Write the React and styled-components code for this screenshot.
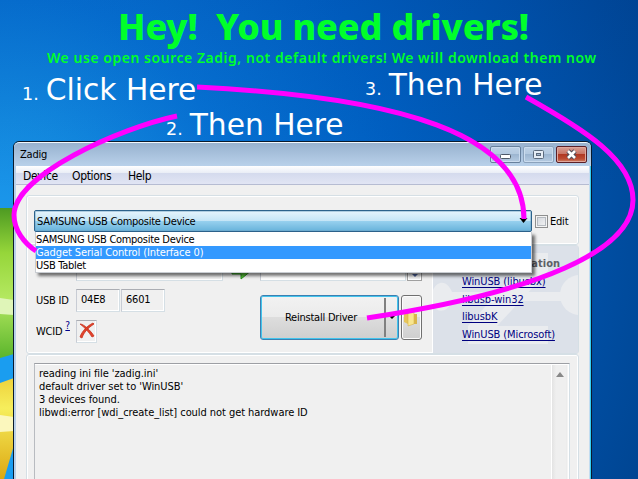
import React from "react";
import styled, { createGlobalStyle } from "styled-components";

const Global = createGlobalStyle`
  * { box-sizing: border-box; }
  body { margin: 0; overflow: hidden; }
`;

const Desktop = styled.div`
  position: relative;
  width: 638px;
  height: 479px;
  overflow: hidden;
  font-family: "DejaVu Sans", sans-serif;
  background:
    linear-gradient(180deg, rgba(0, 50, 140, 0.12), rgba(0, 60, 150, 0) 40%),
    radial-gradient(circle at 0px 220px, #1c98ec 0, #138ae0 100px, #0672d4 230px, #0060c2 400px, #0052aa 560px, #004592 690px);
`;

const Wallpaper = styled.svg`
  position: absolute;
  left: 0;
  top: 200px;
`;

const Heading = styled.h1`
  margin: 0;
  padding-left: 118px;
  height: 49px;
  font: 800 36px/54px "Noto Sans", sans-serif;
  letter-spacing: -0.15px;
  white-space: pre;
  color: #00ff2a;
`;

const Subheading = styled.p`
  margin: 0;
  padding-left: 47px;
  height: 93px;
  font: 600 14px/18px "Noto Sans", sans-serif;
  letter-spacing: 0.53px;
  white-space: nowrap;
  color: #00ff2a;
`;

const Callout = styled.div`
  position: absolute;
  left: ${(p) => p.$x}px;
  top: ${(p) => p.$y}px;
  display: flex;
  align-items: baseline;
  gap: 7px;
  color: #fff;
  font-size: 29.7px;
  line-height: 36px;
  white-space: nowrap;
  small { font-size: 17.5px; }
`;

const Arrows = styled.svg`
  position: absolute;
  inset: 0;
  z-index: 5;
`;

const Window = styled.section`
  position: relative;
  margin: -1px 0 0 13px;
  width: 579px;
  height: 360px;
  border: 1px solid #0a1a2c;
  border-radius: 6px 6px 0 0;
  padding: 0 2px;
  background: linear-gradient(90deg, #b9d1ea 0 2px, transparent 2px 575px, #c4dcf0 575px 576px, #35cdf3 576px);
  overflow: hidden;
  font: 11px/13px "DejaVu Sans Condensed", "DejaVu Sans", sans-serif;
  font-stretch: condensed;
  letter-spacing: -0.22px;
  color: #000;
`;

const TitleBar = styled.header`
  display: flex;
  justify-content: space-between;
  height: 24px;
  margin: 0 -2px;
  padding: 0 4px 0 6px;
  border-top: 1px solid #f2f8fd;
  border-radius: 5px 5px 0 0;
  background: linear-gradient(#98b2cf, #b9d1ea);
  line-height: 24px;
`;

const Controls = styled.div`
  display: flex;
  gap: 2px;
  padding-top: 3px;
`;

const Control = styled.div`
  width: 31px;
  height: 17px;
  border: 1px solid ${(p) => (p.$close ? "#5b2028" : p.$dim ? "#8ba2bc" : "#67809c")};
  border-radius: 2px;
  box-shadow: inset 0 0 0 1px ${(p) => (p.$close ? "#e0a79c" : "#cbdcee")};
  background: ${(p) => (p.$close
    ? "linear-gradient(#d8a095, #c97566 45%, #b03823 50%, #bd4c33 80%, #d0866b)"
    : "linear-gradient(#bdd1e6, #b3c9e0 48%, #9db6d1 50%, #b5cbe2)")};
  svg { display: block; }
`;

const MenuBar = styled.nav`
  display: flex;
  height: 19px;
  padding-left: 7px;
  line-height: 20px;
  font-size: 12px;
  letter-spacing: -0.35px;
  border-bottom: 1px solid #b6bcd2;
  background: linear-gradient(#fff, #e9edf6 7px, #d4daed 7px, #e1e5f4);
`;

const MenuItem = styled.span`
  width: ${(p) => p.$w}px;
`;

const Body = styled.main`
  height: 320px;
  padding: 10px 10px 0;
  background: #f0f0f0;
`;

const Group = styled.div`
  position: relative;
  height: ${(p) => p.$h}px;
  border: 1px solid #d5dfe5;
  border-radius: 3px;
  box-shadow: inset 0 0 0 1px #fff;
`;

const DeviceRow = styled.div`
  display: flex;
  align-items: center;
  padding: 14px 0 0 7px;
`;

const Combo = styled.div`
  width: 498px;
  height: 22px;
  border: 1px solid #2c628b;
  border-radius: 2px;
  padding-left: 2px;
  line-height: 21px;
  letter-spacing: -0.3px;
  box-shadow: inset 0 0 0 1px rgba(110, 160, 190, 0.45);
  background: linear-gradient(#e5f4fc, #c4e5f6 50%, #98d1ef 50%, #68b3db);
`;

const Check = styled.div`
  width: 13px;
  height: 13px;
  margin: 1px 2px 0 3px;
  border: 1px solid #8e8f8f;
  box-shadow: inset 0 0 0 1px #f4f4f4, inset 0 0 0 2px #b5bac0;
  background: linear-gradient(135deg, #cfd3da, #f6f6f6);
`;

const List = styled.div`
  position: absolute;
  z-index: 3;
  left: 8px;
  top: 36px;
  width: 497px;
  height: 41px;
  padding-top: 1px;
  background: #fff;
  border: 1px solid #c9cdd2;
  border-top: 0;
  box-shadow: 3px 3px 3px rgba(0, 0, 0, 0.55);
`;

const Option = styled.div`
  height: 13px;
  line-height: 13px;
  letter-spacing: ${(p) => (p.$on ? -0.1 : -0.3)}px;
  background: ${(p) => (p.$on ? "#3399ff" : "transparent")};
  color: ${(p) => (p.$on ? "#fff" : "#000")};
`;

const DriverGroup = styled(Group)`
  display: grid;
  grid-template-columns: 405px 146px;
`;

const DriverPane = styled.div`
  display: grid;
  grid-template-columns: 233px 162px;
`;

const FieldColumn = styled.div`
  padding: 12px 0 0 9px;
`;

const ActionColumn = styled.div`
  padding-top: 12px;
`;

const Row = styled.div`
  display: flex;
  height: 23px;
  margin-bottom: ${(p) => p.$gap}px;
`;

const Caption = styled.span`
  flex: none;
  width: 40px;
  line-height: 24px;
  white-space: nowrap;
  sup {
    display: inline-block;
    vertical-align: 6px;
    margin-left: 3px;
    font-size: 10px;
    line-height: 10px;
    color: #00008b;
    text-decoration: underline;
  }
`;

const Field = styled.div`
  width: ${(p) => p.$w}px;
  height: 23px;
  margin-right: 1px;
  padding-left: ${(p) => (p.$icon ? 1 : 4)}px;
  line-height: 20px;
  border: 1px solid #d5dfe5;
  border-top-color: #abadb3;
  border-left-color: #c8ccd4;
  box-shadow: inset -1px -1px 0 #fff;
  background: ${(p) => (p.$white ? "#fff" : "#f0f0f0")};
  svg { display: block; }
`;

const Spinner = styled.div`
  width: 15px;
  height: 23px;
  border: 1px solid #a0a0a0;
  box-shadow: inset 0 0 0 1px #fff;
`;

const ButtonRow = styled.div`
  display: flex;
  gap: 2px;
`;

const PushButton = styled.button`
  display: flex;
  align-items: center;
  width: ${(p) => p.$w}px;
  height: 45px;
  padding: 0;
  border: 1px solid ${(p) => (p.$focus ? "#3c7fb1" : "#707070")};
  border-radius: 3px;
  box-shadow: inset 0 0 0 1px ${(p) => (p.$focus ? "#43c4ec" : "#fcfcfc")};
  background: linear-gradient(#f2f2f2, #ebebeb 48%, #dddddd 50%, #cfcfcf);
  font: inherit;
  letter-spacing: inherit;
  span {
    width: 125px;
    height: 39px;
    padding-right: 3px;
    line-height: 39px;
    text-align: center;
    border-right: 2px solid #808080;
  }
`;

const InfoPane = styled.aside`
  position: relative;
  height: 107px;
  background: #dce1e9;
  border-left: 1px solid #fff;
  overflow: hidden;
`;

const Emblem = styled.svg`
  position: absolute;
  inset: 0;
`;

const InfoTitle = styled.div`
  position: relative;
  padding: 11px 18px 0 0;
  text-align: right;
  font-weight: 700;
  letter-spacing: 0;
  color: #5d6066;
  height: 29px;
`;

const InfoLink = styled.a`
  position: relative;
  display: block;
  height: 17.7px;
  margin-left: 29px;
  color: #00007f;
  letter-spacing: -0.1px;
  text-decoration: underline;
  text-underline-offset: 2px;
  white-space: nowrap;
`;

const LogGroup = styled(Group)`
  padding: 8px 8px 0 7px;
`;

const Log = styled.div`
  display: flex;
  justify-content: space-between;
  height: 200px;
  padding-left: 4px;
  border: 1px solid #d5dfe5;
  border-top-color: #9d9fa4;
  border-left-color: #b8bbc0;
  box-shadow: inset 0 1px 0 #fff, inset -1px 0 0 #fff;
`;

const LogText = styled.div`
  padding-top: 3px;
  letter-spacing: -0.06px;
`;

const Scroll = styled.div`
  width: 18px;
  margin-top: 1px;
  border-left: 1px solid #fff;
  background: linear-gradient(90deg, #e3e3e3, #efefef 4px, #efefef 14px, #e9e9e9 15px, #fff 16px);
  svg { display: block; margin: 7px 0 0 4px; }
`;

export default function App() {
  return (
    <>
      <Global />
      <Desktop>
        <Wallpaper width="14" height="279">
          <defs>
            <linearGradient id="leaf" x1="0" y1="0" x2="0" y2="1">
              <stop offset="0" stopColor="#4d9a22" /><stop offset=".3" stopColor="#96d63a" />
              <stop offset=".6" stopColor="#b4e860" /><stop offset="1" stopColor="#5bb52c" />
            </linearGradient>
            <linearGradient id="sun" x1="0" y1="0" x2="0" y2="1">
              <stop offset="0" stopColor="#eed23c" /><stop offset=".3" stopColor="#f6ee5c" />
              <stop offset="1" stopColor="#dda812" />
            </linearGradient>
          </defs>
          <path d="M0 154H14V279H0Z" fill="#1a9df0" />
          <path d="M0 8H14V154L0 158Z" fill="url(#leaf)" />
          <path d="M0 98L14 100V115L0 114Z" fill="#dff5b8" />
          <path d="M0 183L14 178V245L4 279H0Z" fill="url(#sun)" />
          <path d="M0 215L14 217V231L0 232Z" fill="#fbf7bd" />
        </Wallpaper>

        <Heading>Hey!  You need drivers!</Heading>
        <Subheading>We use open source Zadig, not default drivers! We will download them now</Subheading>

        <Callout $x={22} $y={72}><small>1.</small>Click Here</Callout>
        <Callout $x={166} $y={107}><small>2.</small>Then Here</Callout>
        <Callout $x={365} $y={67}><small>3.</small>Then Here</Callout>

        <Window>
          <TitleBar>
            Zadig
            <Controls>
              <Control>
                <svg width="29" height="15"><rect x="9.5" y="7.5" width="10" height="4" rx="1" fill="#fff" stroke="#4d5868" /></svg>
              </Control>
              <Control $dim>
                <svg width="29" height="15"><rect x="9.5" y="3.5" width="10" height="8" rx="1" fill="#e6edf5" stroke="#5c6a7c" /><rect x="12.5" y="6.5" width="4" height="2" fill="#a6bbd2" stroke="#5c6a7c" /></svg>
              </Control>
              <Control $close>
                <svg width="29" height="15"><path d="M11 4L18 11M18 4L11 11" stroke="#514c58" strokeWidth="4.6" /><path d="M11 4L18 11M18 4L11 11" stroke="#fff" strokeWidth="2.6" /></svg>
              </Control>
            </Controls>
          </TitleBar>
          <MenuBar>
            <MenuItem $w={49}>Device</MenuItem>
            <MenuItem $w={56}>Options</MenuItem>
            <MenuItem $w={40}>Help</MenuItem>
          </MenuBar>
          <Body>
            <Group $h={50}>
              <DeviceRow>
                <Combo>SAMSUNG USB Composite Device</Combo>
                <Check />
                Edit
              </DeviceRow>
              <List>
                <Option>SAMSUNG USB Composite Device</Option>
                <Option $on>Gadget Serial Control (Interface 0)</Option>
                <Option>USB Tablet</Option>
              </List>
            </Group>
            <DriverGroup $h={109}>
              <DriverPane>
                <FieldColumn>
                  <Row $gap={8}>
                    <Caption />
                    <Field $w={147} />
                    <svg width="30" height="23"><path d="M8 8H17V2L28 12L17 21V16H8Z" fill="#5dcc3c" stroke="#2d9420" /></svg>
                  </Row>
                  <Row $gap={8}>
                    <Caption>USB ID</Caption>
                    <Field $w={44}>04E8</Field>
                    <Field $w={44}>6601</Field>
                  </Row>
                  <Row $gap={0}>
                    <Caption>WCID<sup>?</sup></Caption>
                    <Field $w={21} $icon>
                      <svg width="17" height="19"><path d="M2 3C6 3 13 10 16 15L14 16C11 11 6 6 2 3ZM15 2L16 3C10 7 6 11 4 17L2 16C4 10 9 5 15 2Z" fill="#e2432b" stroke="#c8321e" strokeWidth=".8" /></svg>
                    </Field>
                  </Row>
                </FieldColumn>
                <ActionColumn>
                  <Row $gap={14}>
                    <Field $w={146} $white />
                    <Spinner><svg width="13" height="21"><path d="M4 15H10L7 18Z" fill="#4a5f97" /></svg></Spinner>
                  </Row>
                  <ButtonRow>
                    <PushButton $w={139} $focus>
                      <span>Reinstall Driver</span>
                      <svg width="11" height="8"><path d="M3 2H9L6 5Z" /></svg>
                    </PushButton>
                    <PushButton $w={21}>
                      <svg width="19" height="20"><path d="M2 5L6 3V16L2 14Z" fill="#e6c55a" /><path d="M6 5L12 2V16L6 18Z" fill="#f8e690" stroke="#d2aa3e" strokeWidth=".5" /><path d="M12 6H15V16H12Z" fill="#d9b64b" /></svg>
                    </PushButton>
                  </ButtonRow>
                </ActionColumn>
              </DriverPane>
              <InfoPane>
                <Emblem width="147" height="107">
                  <g fill="#eaecef">
                    <path d="M68 7H115V25L64 80H115V98H35V80L84 25H68Z" />
                    <path d="M0 44C5 34 14 34 19 46H128V55H19C14 67 5 67 0 60Z" />
                    <circle cx="147" cy="49" r="20" />
                  </g>
                </Emblem>
                <InfoTitle>More Information</InfoTitle>
                <InfoLink>WinUSB (libusbx)</InfoLink>
                <InfoLink>libusb-win32</InfoLink>
                <InfoLink>libusbK</InfoLink>
                <InfoLink>WinUSB (Microsoft)</InfoLink>
              </InfoPane>
            </DriverGroup>
            <LogGroup $h={200}>
              <Log>
                <LogText>
                  <div>reading ini file 'zadig.ini'</div>
                  <div>default driver set to 'WinUSB'</div>
                  <div>3 devices found.</div>
                  <div>libwdi:error [wdi_create_list] could not get hardware ID</div>
                </LogText>
                <Scroll><svg width="8" height="6"><path d="M0 5L4 0L8 5Z" fill="#888" /></svg></Scroll>
              </Log>
            </LogGroup>
          </Body>
        </Window>

        <Arrows width="638" height="479" fill="none" stroke="#ff00ff" strokeWidth="5">
          <path d="M519.5 218H527.5L523.5 223Z" fill="#000" stroke="none" />
          <path d="M197 87C400 97 524 134 524 219" />
          <path d="M177 116C120 128 14 175 14 215C14 230 24 243 36 251" />
          <path d="M526 97C585 130 633 160 633 200C633 250 540 292 367 318" />
        </Arrows>
      </Desktop>
    </>
  );
}
